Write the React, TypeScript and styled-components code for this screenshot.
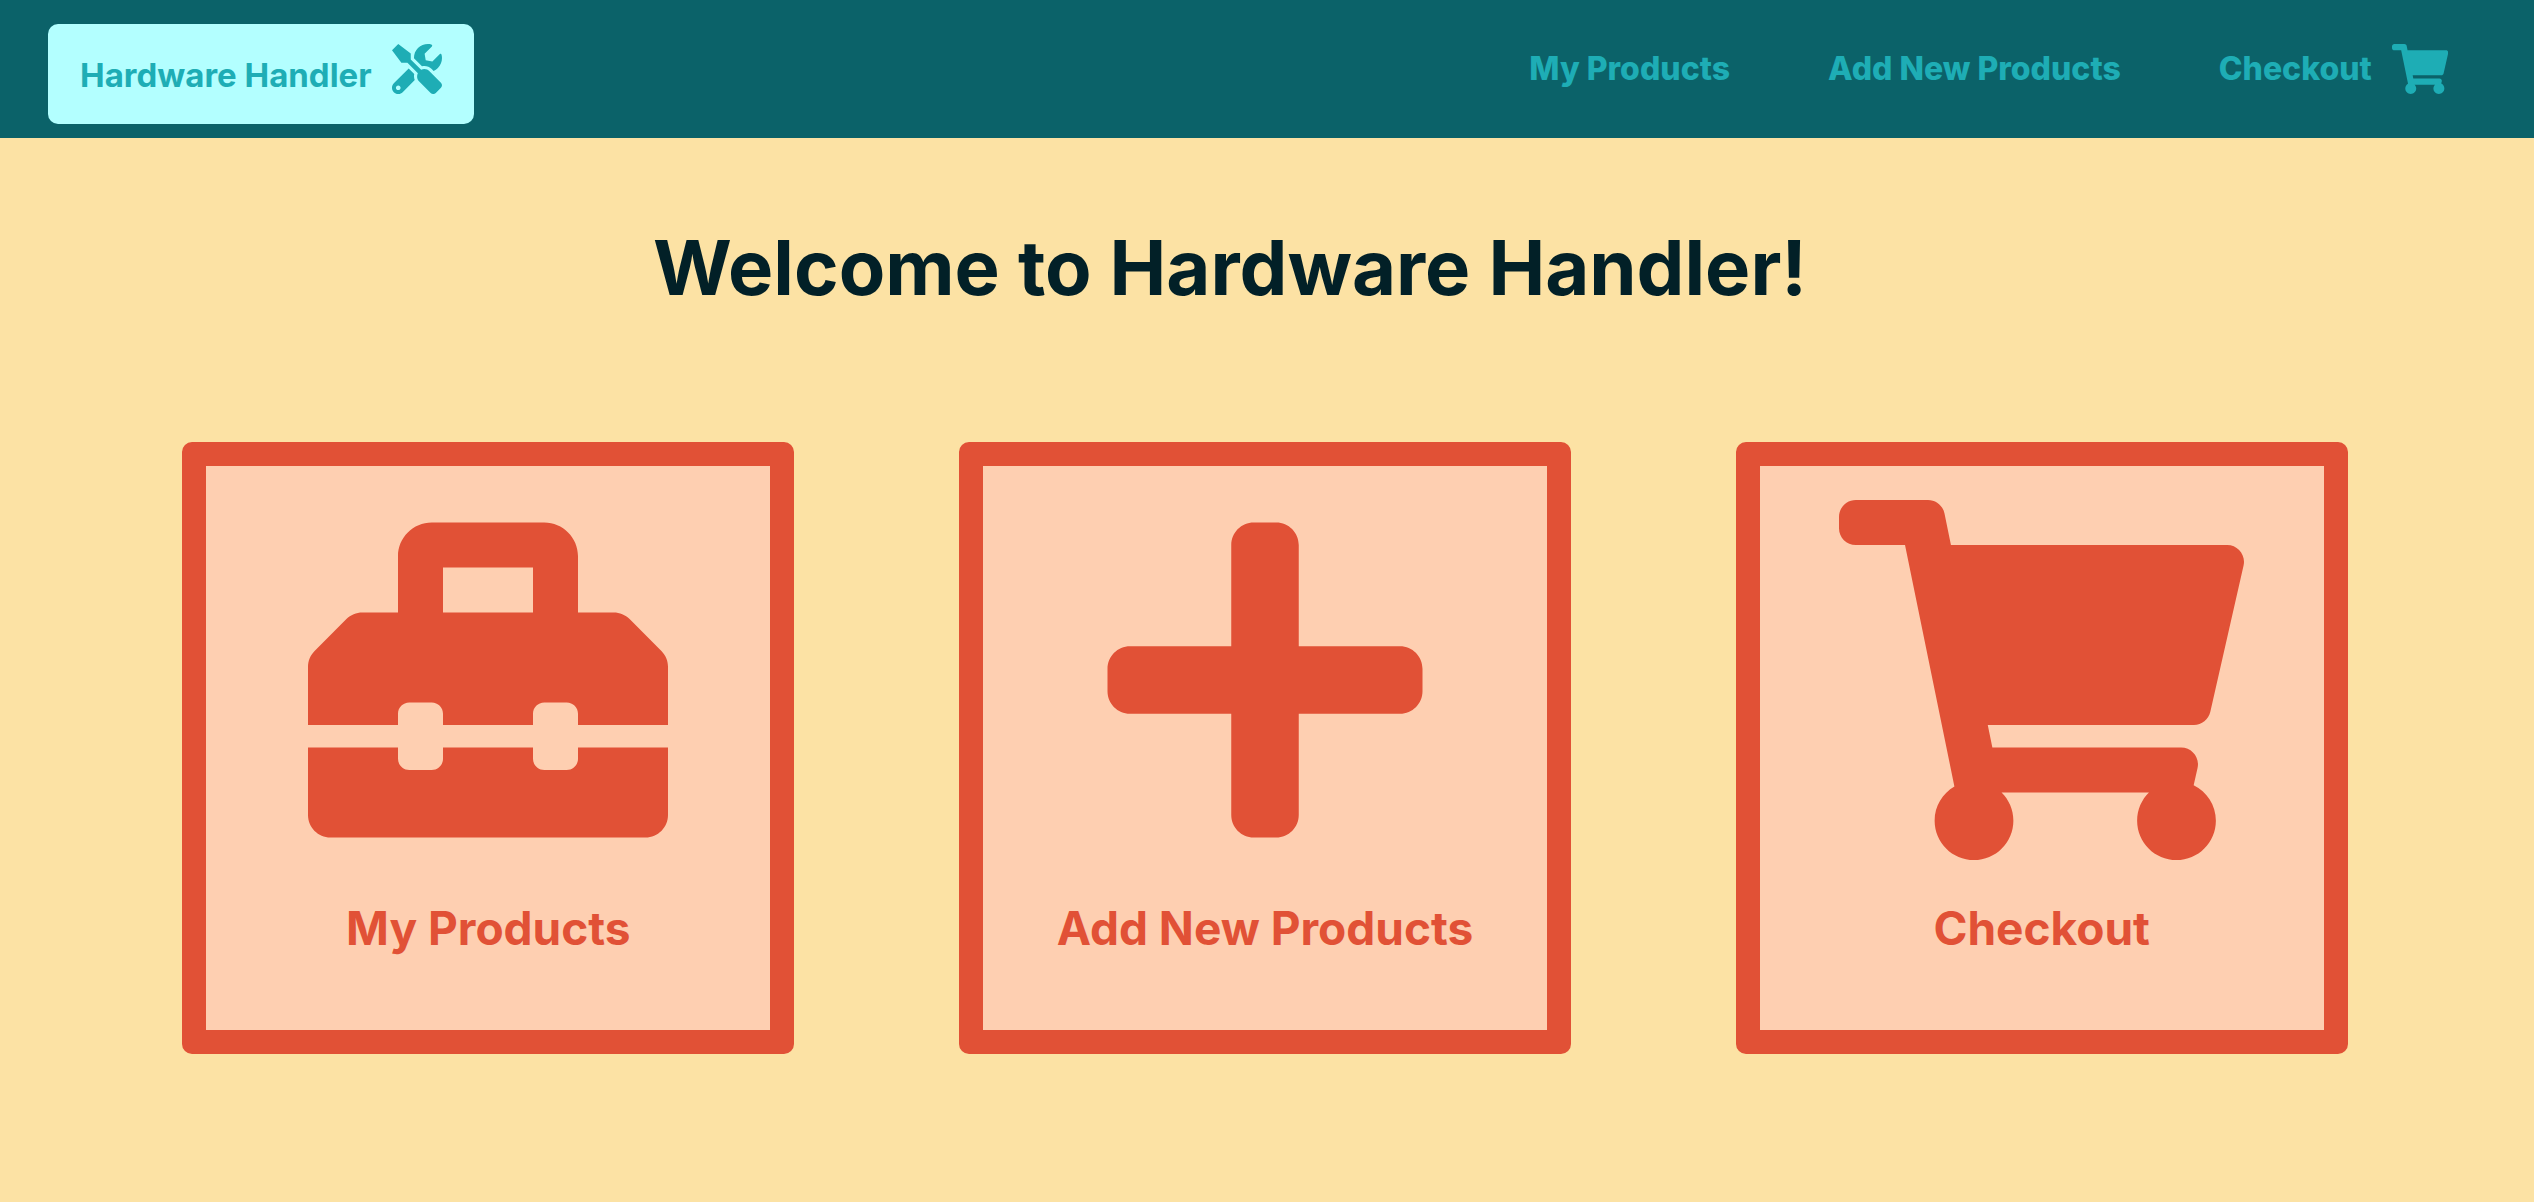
import React from "react";
import styled, { createGlobalStyle } from "styled-components";
import { FaPlus, FaShoppingCart, FaToolbox, FaTools } from "react-icons/fa";

const GlobalStyle = createGlobalStyle`
  *, *::before, *::after { box-sizing: border-box; }
  body {
    margin: 0;
    min-height: 100vh;
    background: #fce2a4;
    color: #022027;
    font-family: Inter, "Liberation Sans", sans-serif;
  }
  a { text-decoration: none; }
  svg { width: auto; flex-shrink: 0; }
`;

/* The cart glyph is wider than it is tall (576 x 512). */
const CartIcon = styled(FaShoppingCart)`
  aspect-ratio: 9 / 8;
`;

const Header = styled.header`
  display: flex;
  align-items: flex-start;
  justify-content: space-between;
  padding: 24px 86px 14px 48px;
  background: #0b6269;
`;

const Brand = styled.a`
  display: flex;
  align-items: flex-start;
  gap: 20px;
  height: 100px;
  padding: 20px 32px;
  border-radius: 10px;
  background: #b3ffff;
  color: #1eadb5;
  font-size: 33px;
  font-weight: 700;
  line-height: 62px;
  white-space: nowrap;

  svg { height: 50px; }
`;

const Nav = styled.nav`
  display: flex;
  align-items: flex-start;
  gap: 98px;
  padding-top: 20px;
`;

const NavLink = styled.a`
  display: flex;
  gap: 20px;
  color: #1eadb5;
  font-size: 32px;
  font-weight: 800;
  line-height: 50px;
  white-space: nowrap;

  svg { height: 50px; }
`;

const Title = styled.h1`
  margin: 80px 74px 126px 0;
  font-size: 76px;
  font-weight: 700;
  line-height: 98px;
  text-align: center;
`;

const Cards = styled.main`
  display: grid;
  grid-template-columns: repeat(3, 1fr);
  justify-items: center;
  padding: 0 104px 100px 100px;
`;

const Card = styled.a`
  display: flex;
  flex-direction: column;
  align-items: center;
  gap: 38px;
  width: 612px;
  height: 612px;
  padding: 34px 0;
  border: 24px solid #e15136;
  border-radius: 10px;
  background: #fecfb1;
  color: #e15136;

  svg { height: 360px; }
`;

const CardLabel = styled.span`
  font-size: 46px;
  font-weight: 700;
  line-height: 60px;
  white-space: nowrap;
`;

const cards = [
  { label: "My Products", href: "#my-products", Icon: FaToolbox },
  { label: "Add New Products", href: "#new-product", Icon: FaPlus },
  { label: "Checkout", href: "#checkout", Icon: CartIcon },
];

export default function App() {
  return (
    <>
      <GlobalStyle />
      <Header>
        <Brand href="#home">
          Hardware Handler
          <FaTools aria-hidden="true" />
        </Brand>
        <Nav aria-label="Main">
          <NavLink href="#my-products">My Products</NavLink>
          <NavLink href="#new-product">Add New Products</NavLink>
          <NavLink href="#checkout">
            Checkout
            <CartIcon aria-hidden="true" />
          </NavLink>
        </Nav>
      </Header>
      <Title>Welcome to Hardware Handler!</Title>
      <Cards>
        {cards.map(({ label, href, Icon }) => (
          <Card key={label} href={href}>
            <Icon aria-hidden="true" />
            <CardLabel>{label}</CardLabel>
          </Card>
        ))}
      </Cards>
    </>
  );
}
